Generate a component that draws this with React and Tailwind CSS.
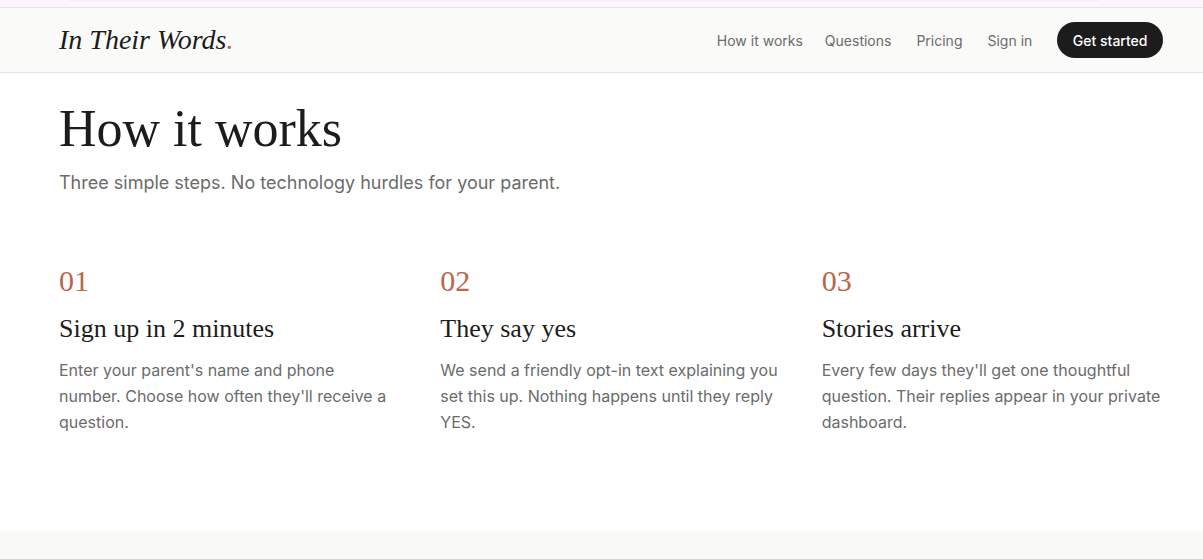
import React from "react";

const serif = "font-['Georgia','Liberation_Serif',serif]";

const STEPS = [
  {
    n: "01",
    title: "Sign up in 2 minutes",
    body: "Enter your parent's name and phone number. Choose how often they'll receive a question.",
  },
  {
    n: "02",
    title: "They say yes",
    body: "We send a friendly opt-in text explaining you set this up. Nothing happens until they reply YES.",
  },
  {
    n: "03",
    title: "Stories arrive",
    body: "Every few days they'll get one thoughtful question. Their replies appear in your private dashboard.",
  },
];

function Header() {
  return (
    <header className="border-b border-[#e4e4e2] bg-[#fafaf8]">
      <div className="flex h-16 items-center justify-between pl-[59px] pr-[40px]">
        <a className={`${serif} text-[28px] italic text-[#1c1c1c]`}>
          In Their Words<span className="text-[#c0643f]">.</span>
        </a>
        <nav className="flex items-center text-[14px] text-[#6b6b6b]">
          <a className="mr-[22px]">How it works</a>
          <a className="mr-[25px]">Questions</a>
          <a className="mr-[25px]">Pricing</a>
          <a className="mr-[25px]">Sign in</a>
          <a className="flex h-9 items-center rounded-full bg-[#1c1c1c] px-[15.5px] font-medium text-white">
            Get started
          </a>
        </nav>
      </div>
    </header>
  );
}

export default function App() {
  return (
    <div className="min-h-[559px] bg-white font-['Inter',sans-serif] text-[#1c1c1c]">
      {/* banner strip left over above the header */}
      <div className="h-[8px] border-b border-[#e9e1ea] bg-[#fdf4fd] px-[68px]">
        <div className="h-[1px] rounded-b bg-[#f3eef3] mr-[35px]" />
      </div>
      <Header />

      <section className="pb-24 pl-[59px] pr-[40px] pt-[29px]">
        <h1 className={`${serif} text-[52px] leading-[53px] font-normal`}>How it works</h1>
        <p className="mt-[14px] text-[18px] leading-7 text-[#6b6b6b]">
          Three simple steps. No technology hurdles for your parent.
        </p>

        <div className="mt-[66px] grid grid-cols-3 gap-10">
          {STEPS.map((s) => (
            <div key={s.n}>
              <div className={`${serif} text-[30px] leading-9 text-[#b8674b]`}>{s.n}</div>
              <h3 className={`${serif} mt-[14px] text-[26px] leading-8`}>{s.title}</h3>
              <p className="mt-3 text-[16px] leading-[26px] text-[#6b6b6b]">{s.body}</p>
            </div>
          ))}
        </div>
      </section>

      <div className="h-[40px] bg-[#f9f9f7]" />
    </div>
  );
}
